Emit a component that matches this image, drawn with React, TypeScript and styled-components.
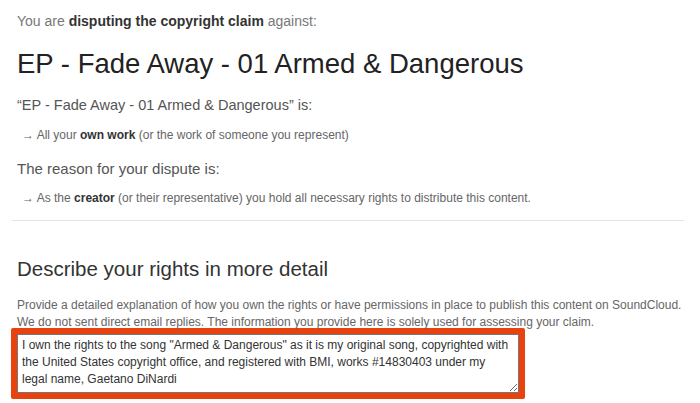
import styled, { createGlobalStyle } from "styled-components";

const GlobalStyle = createGlobalStyle`
  html, body {
    margin: 0;
    padding: 0;
    background: #ffffff;
  }
  body {
    font-family: "Liberation Sans", Arial, sans-serif;
    color: #333333;
  }
`;

const Page = styled.div`
  width: 700px;
  height: 403px;
  overflow: hidden;
  box-sizing: border-box;
  padding: 12px 16px 0 17px;
`;

const Intro = styled.p`
  margin: 0;
  font-size: 14px;
  line-height: 18px;
  color: #777777;

  b {
    color: #333333;
    font-weight: bold;
  }
`;

const Title = styled.h1`
  margin: 17px 0 0 0;
  font-size: 27.5px;
  font-weight: normal;
  line-height: 34px;
  color: #222222;
`;

const Label = styled.p<{ size: number }>`
  margin: 0;
  font-size: ${(p) => p.size}px;
  line-height: 20px;
  color: #555555;
`;

const Answer = styled.p`
  margin: 0;
  padding-left: 5px;
  font-size: 12px;
  line-height: 14px;
  color: #666666;

  b {
    color: #333333;
    font-weight: bold;
  }
`;

const Group = styled.div<{ top: number; gap: number }>`
  display: flex;
  flex-direction: column;
  gap: ${(p) => p.gap}px;
  margin-top: ${(p) => p.top}px;
`;

const Divider = styled.hr`
  margin: 15px 0 0 -5px;
  border: 0;
  border-top: 1px solid #e5e5e5;
  height: 0;
`;

const SubTitle = styled.h2`
  margin: 35px 0 0 0;
  font-size: 20.5px;
  font-weight: normal;
  line-height: 26px;
  color: #333333;
`;

const Help = styled.p`
  margin: 15px 0 0 0;
  font-size: 12px;
  line-height: 17px;
  color: #666666;
`;

const Highlight = styled.div`
  margin: -3px 0 0 -6px;
  width: 514px;
  box-sizing: border-box;
  padding: 6px;
  background: #e8430e;
  border-radius: 2px;
`;

const Box = styled.textarea`
  display: block;
  width: 100%;
  height: 59px;
  box-sizing: border-box;
  padding: 2px 4px;
  border: 1px solid #777777;
  font-family: "Liberation Sans", Arial, sans-serif;
  font-size: 12px;
  line-height: 17px;
  color: #333333;
  resize: vertical;
  overflow: hidden;
  outline: none;
`;

export default function App() {
  return (
    <Page>
      <GlobalStyle />
      <Intro>
        You are <b>disputing the copyright claim</b> against:
      </Intro>
      <Title>EP - Fade Away - 01 Armed &amp; Dangerous</Title>
      <Group top={14} gap={13}>
        <Label size={14.5}>“EP - Fade Away - 01 Armed &amp; Dangerous” is:</Label>
        <Answer>
          → All your <b>own work</b> (or the work of someone you represent)
        </Answer>
      </Group>
      <Group top={17} gap={12}>
        <Label size={15}>The reason for your dispute is:</Label>
        <Answer>
          → As the <b>creator</b> (or their representative) you hold all necessary rights to
          distribute this content.
        </Answer>
      </Group>
      <Divider />
      <SubTitle>Describe your rights in more detail</SubTitle>
      <Help>
        Provide a detailed explanation of how you own the rights or have permissions in place to
        publish this content on SoundCloud. We do not sent direct email replies. The information
        you provide here is solely used for assessing your claim.
      </Help>
      <Highlight>
        <Box
          defaultValue={
            'I own the rights to the song "Armed & Dangerous" as it is my original song, copyrighted with the United States copyright office, and registered with BMI, works #14830403 under my legal name, Gaetano DiNardi'
          }
        />
      </Highlight>
    </Page>
  );
}
